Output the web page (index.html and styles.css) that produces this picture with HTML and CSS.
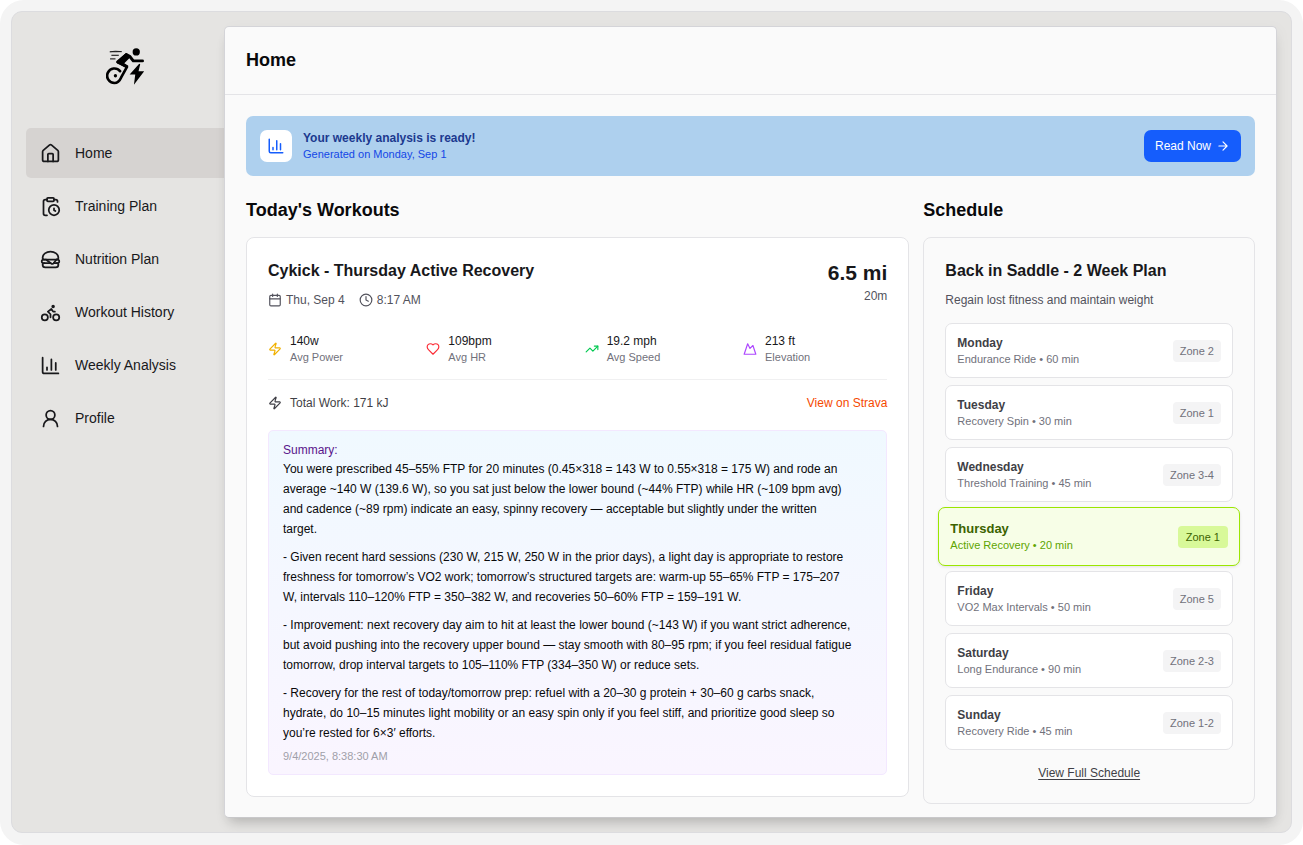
FILE: index.html
```html
<!DOCTYPE html>
<html lang="en">
<head>
    <meta charset="utf-8">
    <meta name="viewport" content="width=device-width, initial-scale=1.0">
    <title>Cykick</title>
    <link rel="stylesheet" href="styles.css">
</head>
<body>
    <div class="frame">
        <div class="app">
            <aside class="sidebar">
                <div class="logo">
                    <svg class="logo-mark" viewBox="45 38 117 112" role="img" aria-label="Cykick">
                        <circle cx="136" cy="50" r="11"/>
                        <path d="M56 49.500Q72 46 92 49Q74 50 56 49.500Z" stroke="#000" stroke-width="2"/>
                        <path d="M62 60h20M58 71h14" stroke="#000" stroke-width="3" stroke-linecap="round"/>
                        <path d="M80 80L106 58L116 63L127 77H155" fill="none" stroke="#000" stroke-width="9" stroke-linecap="round" stroke-linejoin="round"/>
                        <path d="M106 58L80 81L108 95L90 128Q83 144 70 144A22 22 0 1 1 87 108" fill="none" stroke="#000" stroke-width="8" stroke-linecap="round" stroke-linejoin="round"/>
                        <path d="M104 55L118 66L100 84L112 92L106 99L80 84Z"/>
                        <circle cx="73" cy="122" r="5"/>
                        <path d="M145 86L116 118H133L129 149L160 108H143L148 87Z"/>
                    </svg>
                </div>
                <nav class="nav">
                    <a class="nav-item active" href="#">
                        <svg class="icon" viewBox="0 0 24 24"><path d="M15 21v-8a1 1 0 0 0-1-1h-4a1 1 0 0 0-1 1v8"/><path d="M3 10a2 2 0 0 1 .709-1.528l7-6a2 2 0 0 1 2.582 0l7 6A2 2 0 0 1 21 10v9a2 2 0 0 1-2 2H5a2 2 0 0 1-2-2z"/></svg>
                        Home
                    </a>
                    <a class="nav-item" href="#">
                        <svg class="icon" viewBox="0 0 24 24"><path d="M16 14v2.200l1.600 1"/><path d="M16 4h2a2 2 0 0 1 2 2v.832"/><path d="M8 4H6a2 2 0 0 0-2 2v14a2 2 0 0 0 2 2h2"/><circle cx="16" cy="16" r="6"/><rect x="8" y="2" width="8" height="4" rx="1"/></svg>
                        Training Plan
                    </a>
                    <a class="nav-item" href="#">
                        <svg class="icon" viewBox="0 0 24 24"><path d="M12 16H4a2 2 0 1 1 0-4h16a2 2 0 1 1 0 4h-4.250"/><path d="M5 12a2 2 0 0 1-2-2 9 7 0 0 1 18 0 2 2 0 0 1-2 2"/><path d="M5 16a2 2 0 0 0-2 2 3 3 0 0 0 3 3h12a3 3 0 0 0 3-3 2 2 0 0 0-2-2"/><path d="m6.670 12 6.130 4.600a2 2 0 0 0 2.800-.400l3.150-4.200"/></svg>
                        Nutrition Plan
                    </a>
                    <a class="nav-item" href="#">
                        <svg class="icon" viewBox="0 0 24 24"><circle cx="18.500" cy="17.500" r="3.500"/><circle cx="5.500" cy="17.500" r="3.500"/><circle cx="15" cy="5" r="1"/><path d="M12 17.500V14l-3-3 4-3 2 3h2"/></svg>
                        Workout History
                    </a>
                    <a class="nav-item" href="#">
                        <svg class="icon" viewBox="0 0 24 24"><path d="M3 3v16a2 2 0 0 0 2 2h16"/><path d="M18 17V9M13 17V5M8 17v-3"/></svg>
                        Weekly Analysis
                    </a>
                    <a class="nav-item" href="#">
                        <svg class="icon" viewBox="0 0 24 24"><circle cx="12" cy="8" r="5"/><path d="M20 21a8 8 0 0 0-16 0"/></svg>
                        Profile
                    </a>
                </nav>
            </aside>

            <main class="main">
                <header class="header">
                    <h1 class="heading">Home</h1>
                </header>

                <div class="content">
                    <section class="banner">
                        <div class="banner-icon">
                            <svg class="icon" viewBox="0 0 24 24"><path d="M3 3v16a2 2 0 0 0 2 2h16"/><path d="M18 17V9M13 17V5M8 17v-3"/></svg>
                        </div>
                        <div class="banner-text">
                            <div class="banner-title">Your weekly analysis is ready!</div>
                            <div class="banner-date">Generated on Monday, Sep 1</div>
                        </div>
                        <button class="button" type="button">
                            Read Now
                            <svg class="icon icon-small" viewBox="0 0 24 24"><path d="M5 12h14M12 5l7 7-7 7"/></svg>
                        </button>
                    </section>

                    <div class="columns">
                        <section>
                            <h2 class="heading">Today's Workouts</h2>
                            <article class="card workout">
                                <div class="workout-top">
                                    <div>
                                        <h3 class="card-title">Cykick - Thursday Active Recovery</h3>
                                        <div class="meta">
                                            <span class="meta-item">
                                                <svg class="icon icon-small" viewBox="0 0 24 24"><path d="M8 2v4M16 2v4M3 10h18"/><rect x="3" y="4" width="18" height="18" rx="2"/></svg>
                                                Thu, Sep 4
                                            </span>
                                            <span class="meta-item">
                                                <svg class="icon icon-small" viewBox="0 0 24 24"><circle cx="12" cy="12" r="10"/><path d="M12 6v6l4 2"/></svg>
                                                8:17 AM
                                            </span>
                                        </div>
                                    </div>
                                    <div class="totals">
                                        <div class="distance">6.5 mi</div>
                                        <div class="duration">20m</div>
                                    </div>
                                </div>

                                <div class="stats">
                                    <div class="stat">
                                        <svg class="icon icon-small power" viewBox="0 0 24 24"><path d="M4 14a1 1 0 0 1-.780-1.630l9.900-10.200a.5.5 0 0 1 .860.460l-1.920 6.020A1 1 0 0 0 13 10h7a1 1 0 0 1 .780 1.630l-9.900 10.200a.5.5 0 0 1-.860-.460l1.920-6.020A1 1 0 0 0 11 14z"/></svg>
                                        <div>
                                            <div class="stat-value">140w</div>
                                            <div class="stat-label">Avg Power</div>
                                        </div>
                                    </div>
                                    <div class="stat">
                                        <svg class="icon icon-small heart" viewBox="0 0 24 24"><path d="M19 14c1.490-1.460 3-3.210 3-5.500A5.500 5.500 0 0 0 16.500 3c-1.760 0-3 .5-4.500 2-1.500-1.500-2.740-2-4.500-2A5.500 5.500 0 0 0 2 8.500c0 2.300 1.500 4.050 3 5.500l7 7Z"/></svg>
                                        <div>
                                            <div class="stat-value">109bpm</div>
                                            <div class="stat-label">Avg HR</div>
                                        </div>
                                    </div>
                                    <div class="stat">
                                        <svg class="icon icon-small speed" viewBox="0 0 24 24"><path d="M16 7h6v6"/><path d="m22 7-8.500 8.500-5-5L2 17"/></svg>
                                        <div>
                                            <div class="stat-value">19.2 mph</div>
                                            <div class="stat-label">Avg Speed</div>
                                        </div>
                                    </div>
                                    <div class="stat">
                                        <svg class="icon icon-small elevation" viewBox="0 0 24 24"><path d="m8 3 4 8 5-5 5 15H2L8 3z"/></svg>
                                        <div>
                                            <div class="stat-value">213 ft</div>
                                            <div class="stat-label">Elevation</div>
                                        </div>
                                    </div>
                                </div>

                                <div class="work">
                                    <span class="work-total">
                                        <svg class="icon icon-small" viewBox="0 0 24 24"><path d="M4 14a1 1 0 0 1-.780-1.630l9.900-10.200a.5.5 0 0 1 .860.460l-1.920 6.020A1 1 0 0 0 13 10h7a1 1 0 0 1 .780 1.630l-9.900 10.200a.5.5 0 0 1-.860-.460l1.920-6.020A1 1 0 0 0 11 14z"/></svg>
                                        Total Work: 171 kJ
                                    </span>
                                    <a class="strava" href="#">View on Strava</a>
                                </div>

                                <div class="summary">
                                    <div class="summary-label">Summary:</div>
                                    <p>You were prescribed 45–55% FTP for 20 minutes (0.45×318 = 143 W to 0.55×318 = 175 W) and rode an<br>average ~140 W (139.6 W), so you sat just below the lower bound (~44% FTP) while HR (~109 bpm avg)<br>and cadence (~89 rpm) indicate an easy, spinny recovery — acceptable but slightly under the written<br>target.</p>
                                    <p>- Given recent hard sessions (230 W, 215 W, 250 W in the prior days), a light day is appropriate to restore<br>freshness for tomorrow’s VO2 work; tomorrow’s structured targets are: warm-up 55–65% FTP = 175–207<br>W, intervals 110–120% FTP = 350–382 W, and recoveries 50–60% FTP = 159–191 W.</p>
                                    <p>- Improvement: next recovery day aim to hit at least the lower bound (~143 W) if you want strict adherence,<br>but avoid pushing into the recovery upper bound — stay smooth with 80–95 rpm; if you feel residual fatigue<br>tomorrow, drop interval targets to 105–110% FTP (334–350 W) or reduce sets.</p>
                                    <p>- Recovery for the rest of today/tomorrow prep: refuel with a 20–30 g protein + 30–60 g carbs snack,<br>hydrate, do 10–15 minutes light mobility or an easy spin only if you feel stiff, and prioritize good sleep so<br>you’re rested for 6×3′ efforts.</p>
                                    <div class="summary-date">9/4/2025, 8:38:30 AM</div>
                                </div>
                            </article>
                        </section>

                        <section>
                            <h2 class="heading">Schedule</h2>
                            <div class="card schedule">
                                <h3 class="card-title">Back in Saddle - 2 Week Plan</h3>
                                <div class="plan-goal">Regain lost fitness and maintain weight</div>
                                <ul class="days">
                                    <li class="day">
                                        <div>
                                            <div class="day-name">Monday</div>
                                            <div class="day-ride">Endurance Ride • 60 min</div>
                                        </div>
                                        <span class="zone">Zone 2</span>
                                    </li>
                                    <li class="day">
                                        <div>
                                            <div class="day-name">Tuesday</div>
                                            <div class="day-ride">Recovery Spin • 30 min</div>
                                        </div>
                                        <span class="zone">Zone 1</span>
                                    </li>
                                    <li class="day">
                                        <div>
                                            <div class="day-name">Wednesday</div>
                                            <div class="day-ride">Threshold Training • 45 min</div>
                                        </div>
                                        <span class="zone">Zone 3-4</span>
                                    </li>
                                    <li class="day today">
                                        <div>
                                            <div class="day-name">Thursday</div>
                                            <div class="day-ride">Active Recovery • 20 min</div>
                                        </div>
                                        <span class="zone">Zone 1</span>
                                    </li>
                                    <li class="day">
                                        <div>
                                            <div class="day-name">Friday</div>
                                            <div class="day-ride">VO2 Max Intervals • 50 min</div>
                                        </div>
                                        <span class="zone">Zone 5</span>
                                    </li>
                                    <li class="day">
                                        <div>
                                            <div class="day-name">Saturday</div>
                                            <div class="day-ride">Long Endurance • 90 min</div>
                                        </div>
                                        <span class="zone">Zone 2-3</span>
                                    </li>
                                    <li class="day">
                                        <div>
                                            <div class="day-name">Sunday</div>
                                            <div class="day-ride">Recovery Ride • 45 min</div>
                                        </div>
                                        <span class="zone">Zone 1-2</span>
                                    </li>
                                </ul>
                                <a class="full-schedule" href="#">View Full Schedule</a>
                            </div>
                        </section>
                    </div>
                </div>
            </main>
        </div>
    </div>
</body>
</html>
```
FILE: styles.css
```css
:root {
    --border: #e4e4e7;
    --text: #18181b;
    --muted: #52525c;
}

* {
    box-sizing: border-box;
}

body {
    margin: 0;
    background: #fff;
    color: var(--text);
    font-family: "Liberation Sans", Arial, sans-serif;
    font-size: 12px;
    line-height: 18px;
}

h1, h2, h3, p, ul {
    margin: 0;
    padding: 0;
}

a {
    color: inherit;
    text-decoration: none;
}

.frame {
    min-height: 100vh;
    display: flex;
    padding: 11px 11px 12px;
    background: #f4f4f4;
    border-radius: 24px;
}

.app {
    flex: 1;
    display: flex;
    padding: 14px;
    background: #e5e4e2;
    border: 1px solid #dcdcdf;
    border-radius: 11px;
    overflow: hidden;
}

.icon {
    width: 21px;
    height: 21px;
    flex-shrink: 0;
    fill: none;
    stroke: currentColor;
    stroke-width: 2;
    stroke-linecap: round;
    stroke-linejoin: round;
}

.icon-small {
    width: 14px;
    height: 14px;
}

/* Sidebar */
.sidebar {
    width: 198px;
    flex-shrink: 0;
}

.logo {
    display: flex;
    justify-content: center;
    padding: 22px 0 43px;
}

.logo-mark {
    width: 39px;
    height: 37px;
}

.nav {
    display: flex;
    flex-direction: column;
    gap: 3px;
}

.nav-item {
    display: flex;
    align-items: center;
    gap: 14px;
    height: 50px;
    padding-left: 14px;
    border-radius: 5px 0 0 5px;
    font-size: 14px;
}

.nav-item.active {
    background: #d6d3d1;
}

/* Main panel */
.main {
    flex: 1;
    min-width: 0;
    background: #fafafa;
    border: 1px solid #d4d4d8;
    border-bottom-color: #c8c8ca;
    border-radius: 5px;
    box-shadow: 0 9px 12px -5px rgba(0, 0, 0, 0.2), 3px 2px 14px rgba(0, 0, 0, 0.03);
}

.header {
    padding: 21px 21px 22px;
    border-bottom: 1px solid var(--border);
}

.heading {
    font-size: 18px;
    line-height: 24px;
    font-weight: bold;
    color: #09090b;
}

.content {
    padding: 21px 21px 13px;
}

.banner {
    display: flex;
    align-items: center;
    gap: 11px;
    padding: 14px;
    background: #aed0ee;
    border-radius: 7px;
}

.banner-icon {
    display: flex;
    align-items: center;
    justify-content: center;
    width: 32px;
    height: 32px;
    background: #fff;
    border-radius: 7px;
    color: #155dfc;
}

.banner-icon .icon {
    width: 18px;
    height: 18px;
}

.banner-text {
    flex: 1;
    line-height: 16px;
}

.banner-title {
    font-weight: bold;
    color: #1c398e;
}

.banner-date {
    font-size: 11px;
    color: #1447e6;
}

.button {
    display: flex;
    align-items: center;
    gap: 5px;
    height: 32px;
    padding: 0 11px;
    background: #155dfc;
    border: none;
    border-radius: 7px;
    color: #fff;
    font-family: inherit;
    font-size: 12px;
    cursor: pointer;
}

.columns {
    display: grid;
    grid-template-columns: 2fr 1fr;
    gap: 14px;
    align-items: start;
    margin-top: 22px;
}

.card {
    margin-top: 15px;
    padding: 21px;
    border: 1px solid var(--border);
    border-radius: 8px;
}

.card-title {
    font-size: 16px;
    line-height: 24px;
    font-weight: bold;
}

/* Workout card */
.workout {
    background: #fff;
}

.workout-top {
    display: flex;
    justify-content: space-between;
}

.meta {
    display: flex;
    gap: 14px;
    margin-top: 8px;
    color: var(--muted);
}

.meta-item {
    display: flex;
    align-items: center;
    gap: 4px;
}

.totals {
    text-align: right;
}

.distance {
    font-size: 21px;
    line-height: 28px;
    font-weight: bold;
}

.duration {
    color: var(--muted);
}

.stats {
    display: grid;
    grid-template-columns: repeat(4, 1fr);
    gap: 14px;
    margin-top: 24px;
    padding-bottom: 14px;
    border-bottom: 1px solid #f0f0f1;
}

.stat {
    display: flex;
    align-items: center;
    gap: 8px;
    line-height: 16px;
}

.stat-label {
    font-size: 11px;
    color: #71717b;
}

.power {
    color: #f0b100;
}

.heart {
    color: #fb2c36;
}

.speed {
    color: #00c950;
}

.elevation {
    color: #ad46ff;
}

.work {
    display: flex;
    justify-content: space-between;
    margin-top: 14px;
    color: #3f3f46;
}

.work-total {
    display: flex;
    align-items: center;
    gap: 8px;
}

.strava {
    color: #f54900;
}

.summary {
    margin-top: 18px;
    padding: 10px 14px 8px;
    background: linear-gradient(#f0f9ff, #faf5ff);
    border: 1px solid #f3e8ff;
    border-radius: 5px;
    color: #09090b;
    line-height: 20px;
    white-space: nowrap;
}

.summary p + p {
    margin-top: 8px;
}

.summary-label {
    line-height: 18px;
    color: #59168b;
}

.summary-date {
    margin-top: 3px;
    font-size: 11px;
    color: #9f9fa9;
}

/* Schedule card */
.plan-goal {
    margin-top: 8px;
    color: var(--muted);
}

.days {
    display: flex;
    flex-direction: column;
    gap: 7px;
    margin-top: 14px;
    list-style: none;
}

.day {
    display: flex;
    align-items: center;
    justify-content: space-between;
    height: 55px;
    padding: 0 11px;
    background: #fff;
    border: 1px solid var(--border);
    border-radius: 7px;
    line-height: 16px;
}

.day-name {
    font-weight: bold;
    color: #3f3f46;
}

.day-ride {
    font-size: 11px;
    color: #71717b;
}

.zone {
    padding: 3px 7px;
    background: #f4f4f5;
    border-radius: 4px;
    font-size: 11px;
    color: #71717b;
}

.today {
    height: 59px;
    margin: -2px -7px;
    background: #f7fee7;
    border-color: #9ae600;
    box-shadow: 0 1px 3px rgba(0, 0, 0, 0.1);
}

.today .day-name {
    font-size: 13px;
    color: #3c6300;
}

.today .day-ride {
    color: #5ea500;
}

.today .zone {
    padding: 3px 8px;
    background: #d8f999;
    color: #3c6300;
}

.full-schedule {
    display: block;
    width: fit-content;
    margin: 14px auto 0;
    color: #3f3f46;
    text-decoration: underline;
    text-underline-offset: 2px;
}
```
